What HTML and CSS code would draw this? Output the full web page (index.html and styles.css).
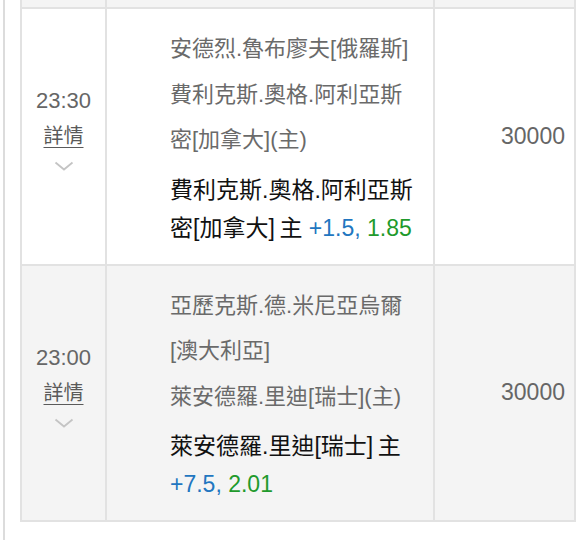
FILE: index.html
```html
<!DOCTYPE html>
<html lang="zh-Hant">
<head>
<meta charset="utf-8">
<link rel="stylesheet" href="styles.css">
</head>
<body>
<div class="frame">
  <div class="table">
    <div class="row row-alt row-tail">
      <div class="cell"></div>
      <div class="cell"></div>
      <div class="cell"></div>
    </div>
    <div class="row">
      <div class="cell cell-time">
        <div class="time">23:30</div>
        <a class="detail">詳情</a>
        <svg class="chevron" width="20" height="11" viewBox="0 0 20 11"><path d="M1.5 1.5 L10 8.5 L18.5 1.5" fill="none" stroke="#c4c4c4" stroke-width="1.8"/></svg>
      </div>
      <div class="cell cell-match">
        <div class="teams">
          <div>安德烈.魯布廖夫[俄羅斯]</div>
          <div>費利克斯.奧格.阿利亞斯密[加拿大](主)</div>
        </div>
        <div class="pick">費利克斯.奧格.阿利亞斯密[加拿大]&thinsp;主 <span class="hcp">+1.5,</span> <span class="odds">1.85</span></div>
      </div>
      <div class="cell cell-amount">30000</div>
    </div>
    <div class="row row-alt">
      <div class="cell cell-time">
        <div class="time">23:00</div>
        <a class="detail">詳情</a>
        <svg class="chevron" width="20" height="11" viewBox="0 0 20 11"><path d="M1.5 1.5 L10 8.5 L18.5 1.5" fill="none" stroke="#c4c4c4" stroke-width="1.8"/></svg>
      </div>
      <div class="cell cell-match">
        <div class="teams">
          <div>亞歷克斯.德.米尼亞烏爾[澳大利亞]</div>
          <div>萊安德羅.里迪[瑞士](主)</div>
        </div>
        <div class="pick">萊安德羅.里迪[瑞士]&thinsp;主 <span class="hcp">+7.5,</span> <span class="odds">2.01</span></div>
      </div>
      <div class="cell cell-amount">30000</div>
    </div>
  </div>
</div>
</body>
</html>
```

FILE: styles.css
```css
html, body {
  margin: 0;
  padding: 0;
  background: #ffffff;
}
body {
  font-family: "Liberation Sans", "Noto Sans CJK TC", sans-serif;
  color: #666666;
  height: 540px;
  overflow: hidden;
}
.frame {
  margin-left: 3px;
  border-left: 2px solid #dcdcdc;
  padding-left: 15px;
  min-height: 540px;
}
.table {
  width: 556px;
  border-left: 2px solid #e2e2e2;
  box-sizing: border-box;
}
.row {
  display: grid;
  grid-template-columns: 85px 328px 141px;
  border-bottom: 2px solid #e2e2e2;
}
.row-alt {
  background: #f4f4f4;
}
.row-tail {
  height: 7px;
}
.cell {
  border-right: 2px solid #e2e2e2;
  box-sizing: border-box;
}
.cell-time {
  display: flex;
  flex-direction: column;
  align-items: center;
  justify-content: center;
  padding-bottom: 14px;
}
.time {
  font-size: 22px;
  line-height: 30px;
  color: #666666;
}
.detail {
  font-size: 20px;
  line-height: 30px;
  margin-top: 5px;
  color: #5a5a5a;
  text-decoration: underline;
  text-underline-offset: 4px;
  text-decoration-thickness: 1px;
}
.chevron {
  display: block;
  margin-top: 10px;
}
.cell-match {
  padding: 17px 0 17px 63px;
  display: flex;
  flex-direction: column;
  justify-content: center;
}
.teams {
  width: 250px;
  font-size: 22px;
  line-height: 45.5px;
  color: #6a6a6a;
}
.pick {
  width: 250px;
  margin-top: 8px;
  font-size: 23px;
  line-height: 38px;
  color: #111111;
}
.hcp {
  color: #2276c0;
}
.odds {
  color: #1f9a2c;
}
.cell-amount {
  display: flex;
  align-items: center;
  justify-content: flex-end;
  padding-right: 9px;
  font-size: 23px;
  color: #666666;
}
```
